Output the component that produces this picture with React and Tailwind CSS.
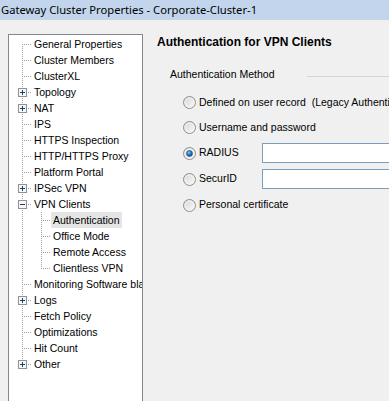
import React from 'react';

const treeItems = [
  { label: 'General Properties', first: true },
  { label: 'Cluster Members' },
  { label: 'ClusterXL' },
  { label: 'Topology', box: 'plus' },
  { label: 'NAT', box: 'plus' },
  { label: 'IPS' },
  { label: 'HTTPS Inspection' },
  { label: 'HTTP/HTTPS Proxy' },
  { label: 'Platform Portal' },
  { label: 'IPSec VPN', box: 'plus' },
  { label: 'VPN Clients', box: 'minus', open: true },
  { label: 'Authentication', child: true, selected: true },
  { label: 'Office Mode', child: true },
  { label: 'Remote Access', child: true },
  { label: 'Clientless VPN', child: true, lastChild: true },
  { label: 'Monitoring Software blade' },
  { label: 'Logs', box: 'plus' },
  { label: 'Fetch Policy' },
  { label: 'Optimizations' },
  { label: 'Hit Count' },
  { label: 'Other', box: 'plus', last: true },
];

const dots = '1 1';

// connector lines for one 16px tree row, drawn in tree-local coordinates
function Connector({ item }) {
  const width = item.child ? 42 : 23;
  const top = item.first ? 8 : 0;
  const bottom = item.last ? 8 : 16;
  return (
    <svg width={width} height="16" className="shrink-0" shapeRendering="crispEdges">
      <line x1="13.5" y1={top} x2="13.5" y2={bottom} stroke="#a0a0a0" strokeDasharray={dots} />
      {item.child ? (
        <>
          <line x1="32.5" y1="0" x2="32.5" y2={item.lastChild ? 9 : 16} stroke="#a0a0a0" strokeDasharray={dots} />
          <line x1="34" y1="8.5" x2="42" y2="8.5" stroke="#a0a0a0" strokeDasharray={dots} />
        </>
      ) : (
        <line x1={item.box ? 19 : 15} y1="8.5" x2="23" y2="8.5" stroke="#a0a0a0" strokeDasharray={dots} />
      )}
      {item.open && (
        <line x1="32.5" y1="14" x2="32.5" y2="16" stroke="#a0a0a0" strokeDasharray={dots} />
      )}
      {item.box && (
        <>
          <rect x="9.5" y="4.5" width="8" height="8" fill="#f7f7f7" stroke="#919191" />
          <line x1="11" y1="8.5" x2="16" y2="8.5" stroke="#1f3d7a" />
          {item.box === 'plus' && (
            <line x1="13.5" y1="6" x2="13.5" y2="11" stroke="#1f3d7a" />
          )}
        </>
      )}
    </svg>
  );
}

function TreeRow({ item }) {
  return (
    <div className="flex h-[16px] items-center">
      <Connector item={item} />
      <span
        className={
          'whitespace-nowrap px-[2px] leading-[16px] ' +
          (item.selected ? 'bg-[#e5e5e5]' : '')
        }
      >
        {item.label}
      </span>
    </div>
  );
}

function Radio({ checked }) {
  return (
    <svg width="13" height="13" viewBox="0 0 13 13" className="shrink-0">
      <defs>
        <linearGradient id="rfill" x1="0" y1="0" x2="1" y2="1">
          <stop offset="0" stopColor="#d4d4d4" />
          <stop offset="1" stopColor="#fcfcfc" />
        </linearGradient>
        <radialGradient id="rdot" cx="0.4" cy="0.35" r="0.7">
          <stop offset="0" stopColor="#8cc6f0" />
          <stop offset="0.5" stopColor="#2f78c0" />
          <stop offset="1" stopColor="#123f78" />
        </radialGradient>
      </defs>
      <circle cx="6.5" cy="6.5" r="6" fill="url(#rfill)" stroke="#8f8f8f" />
      <circle cx="6.5" cy="6.5" r="4.5" fill="none" stroke="#f4f4f4" />
      {checked && <circle cx="6.5" cy="6.5" r="3" fill="url(#rdot)" stroke="#1c4f8c" strokeWidth="0.6" />}
    </svg>
  );
}

function Option({ label, checked, input, h }) {
  return (
    <div className={'flex items-center ' + h}>
      <Radio checked={checked} />
      <span className={'ml-[3px] whitespace-pre ' + (input ? 'w-[63px] shrink-0' : '')}>{label}</span>
      {input && <div className="h-[20px] w-[160px] shrink-0 border border-[#7b9ebd] bg-white" />}
    </div>
  );
}

export default function App() {
  return (
    <div className="h-[401px] w-[389px] overflow-hidden bg-[#f0f0f0] font-['Liberation_Sans',Arial,sans-serif] text-[10.5px] text-black">
      <div className="flex h-[20px] items-center bg-[#c2d5ed] pl-[1px] font-['Noto_Sans',sans-serif] text-[11.2px]">
        Gateway Cluster Properties - Corporate-Cluster-1
      </div>
      <div className="flex items-start pt-[14px]">
        <div className="ml-[8px] h-[380px] w-[135px] shrink-0 overflow-hidden border border-[#828790] bg-white pt-[1px]">
          {treeItems.map((item) => (
            <TreeRow key={item.label} item={item} />
          ))}
        </div>
        <div className="ml-[14px] flex min-w-0 flex-1 flex-col">
          <div className="h-[16px] whitespace-nowrap text-[12px] font-bold leading-[16px]">
            Authentication for VPN Clients
          </div>
          <div className="mt-[17px] flex h-[16px] items-center pl-[13px]">
            <span className="w-[137px] shrink-0 whitespace-nowrap">Authentication Method</span>
            <div className="mt-[3px] h-px flex-1 bg-[#d5d5d5]" />
          </div>
          <div className="mt-[7px] flex flex-col pl-[26px]">
            <Option label="Defined on user record  (Legacy Authentication)" h="h-[25px]" />
            <Option label="Username and password" h="h-[25px]" />
            <Option label="RADIUS" checked input h="h-[26px]" />
            <Option label="SecurID" input h="h-[26px]" />
            <Option label="Personal certificate" h="h-[26px]" />
          </div>
        </div>
      </div>
    </div>
  );
}
